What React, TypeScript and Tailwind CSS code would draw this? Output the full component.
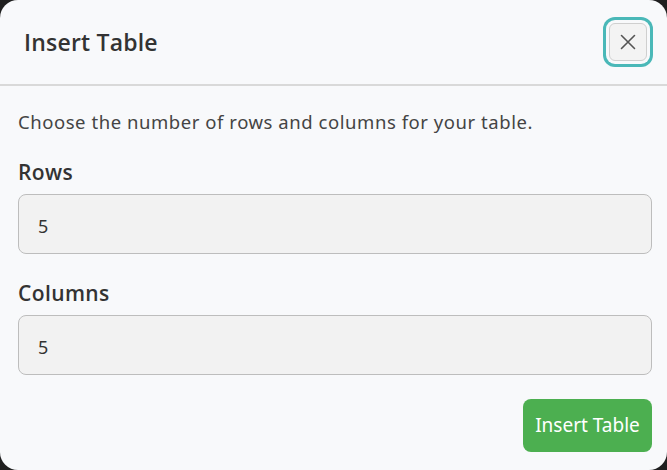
import * as React from "react";

const FONT = { fontFamily: '"Noto Sans", "Open Sans", sans-serif' };
const HEAD = { fontFamily: '"Open Sans", "Noto Sans", sans-serif' };

export default function App() {
  const [rows, setRows] = React.useState("5");
  const [cols, setCols] = React.useState("5");

  return (
    <div className="h-[470px] w-[667px] bg-[#1f1f1f]" style={FONT}>
      <div className="flex h-full flex-col overflow-hidden rounded-[18px] bg-[#f8f9fb]">
        {/* Header */}
        <div className="flex h-[86px] items-center justify-between border-b-2 border-[#d9d9d9] pl-6 pr-[17px]">
          <h2 className="text-[23px] font-semibold tracking-[0.2px] text-[#333]" style={HEAD}>
            Insert Table
          </h2>
          <div className="rounded-[9px] p-[3px] ring-[3px] ring-[#4ab8b8]">
            <button className="flex h-[38px] w-[38px] items-center justify-center rounded-[6px] border border-[#cfcfcf] bg-[#f3f3f3]">
              <svg width="18" height="18" viewBox="0 0 18 18" fill="none" stroke="#555" strokeWidth="1.6" strokeLinecap="round">
                <path d="M2.5 2.5 15.5 15.5M15.5 2.5 2.5 15.5" />
              </svg>
            </button>
          </div>
        </div>

        {/* Body */}
        <div className="flex flex-col pl-[18px] pr-[15px] pt-[22px]">
          <p className="text-[18.5px] leading-[28px] tracking-[0.55px] text-[#444]">
            Choose the number of rows and columns for your table.
          </p>

          <label className="mt-[21px] text-[21px] leading-[30px] font-semibold tracking-[0.4px] text-[#333]" style={HEAD}>
            Rows
          </label>
          <input
            value={rows}
            onChange={(e) => setRows(e.target.value)}
            className="mt-[7px] h-[60px] w-full rounded-[8px] border border-[#bdbdbd] bg-[#f2f2f2] px-[19px] pt-[3px] text-[18px] text-[#333] outline-none"
          />

          <label className="mt-[24px] text-[21px] leading-[30px] font-semibold tracking-[0.4px] text-[#333]" style={HEAD}>
            Columns
          </label>
          <input
            value={cols}
            onChange={(e) => setCols(e.target.value)}
            className="mt-[7px] h-[60px] w-full rounded-[8px] border border-[#bdbdbd] bg-[#f2f2f2] px-[19px] pt-[3px] text-[18px] text-[#333] outline-none"
          />

          <div className="mt-[24px] flex justify-end">
            <button className="h-[53px] w-[129px] rounded-[8px] bg-[#4caf50] text-[19px] text-white">
              Insert Table
            </button>
          </div>
        </div>
      </div>
    </div>
  );
}
